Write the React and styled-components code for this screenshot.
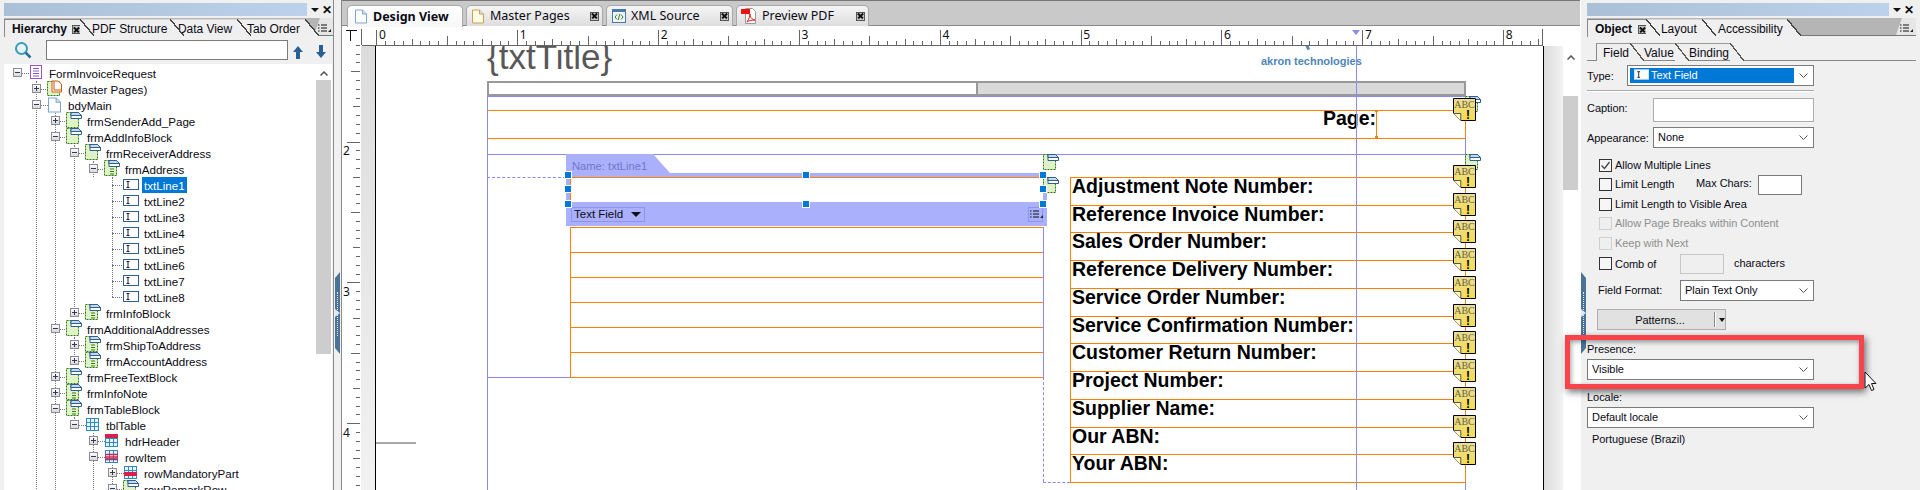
import React from 'react';
import styled, { createGlobalStyle } from 'styled-components';

const Global = createGlobalStyle`
  html, body { margin: 0; padding: 0; background: #efefef; overflow: hidden; }
  * { box-sizing: border-box; }
`;
const UI = `"Liberation Sans", Arial, sans-serif`;
const NOTO = `"Noto Sans", "Liberation Sans", sans-serif`;
const ARIAL = `"Liberation Sans", Arial, sans-serif`;

const Screen = styled.div`
  position: relative; width: 1920px; height: 490px; overflow: hidden;
  display: grid; grid-template-columns: 341px 1239px 340px;
  font: 11px ${UI}; letter-spacing: -0.05px; color: #0a0a14; background: #efefef;
`;

/* ---------- docked panels ---------- */
const Dock = styled.section`
  position: relative; height: 490px; background: #f0f0f0;
`;
const TitleRow = styled.div`
  position: absolute; top: 3px; left: ${p => p.$x}px; width: ${p => p.$w}px; height: 13px;
  display: flex; align-items: center;
`;
const TitleGradient = styled.div`
  flex: 1; height: 13px; background: linear-gradient(90deg, #a9c0d6, #bcd2ea);
`;
const TitleButtons = styled.div`
  width: ${p => p.$w}px; display: flex; justify-content: space-between; align-items: center;
  padding: 0 2px 0 ${p => p.$pad}px;
`;
const DropArrow = styled.i`
  width: 0; height: 0; border-left: 4px solid transparent; border-right: 4px solid transparent;
  border-top: 4px solid #111;
`;
const CloseX = styled.span`
  font: bold 12px ${ARIAL}; line-height: 12px;
`;
const TabStrip = styled.div`
  position: absolute; left: ${p => p.$x}px; top: 18px; width: ${p => p.$w}px; height: 18px;
  background: #b5b5b5; border-bottom: 1px solid #777;
`;
const PanelTab = styled.div`
  position: absolute; left: ${p => p.$x}px; top: 1px; width: ${p => p.$w}px; height: 17px;
  background: #efefef; padding-left: ${p => p.$pad}px; line-height: 18px; white-space: nowrap;
  font-size: 12px; letter-spacing: -0.05px;
  font-weight: ${p => (p.$active ? 700 : 400)}; z-index: ${p => p.$z};
  border-top: 1px solid ${p => (p.$active ? '#888' : '#d8d8d8')};
  ${p => (p.$active ? 'border-left: 1px solid #888; height: 18px;' : '')}
  &::after {
    content: ''; position: absolute; left: 100%; top: -1px; width: 14px; height: 17px;
    background: linear-gradient(to top right, #efefef calc(50% - .7px), #444 calc(50% - .7px), #444 calc(50% + .7px), transparent calc(50% + .7px));
  }
`;
const TabClose = styled.span`
  position: absolute; left: ${p => p.$x}px; top: 5px; width: 9px; height: 9px;
  background: #c4c4c4; border: 1px solid #555;
  &::before, &::after {
    content: ''; position: absolute; left: 0px; top: 2.5px; width: 7px; height: 1.6px; background: #111;
  }
  &::before { transform: rotate(45deg); }
  &::after { transform: rotate(-45deg); }
`;
const StripMenu = styled.div`
  position: absolute; right: 0; top: 0; width: 20px; height: 17px; padding: 6px 0 0 4px;
  background: #e6e6e6; clip-path: polygon(30% 0, 100% 0, 100% 100%, 0 100%); line-height: 0;
`;

/* ---------- search ---------- */
const SearchRow = styled.div`
  position: absolute; left: 0; top: 40px; width: 334px; height: 20px;
`;
const SearchInput = styled.div`
  position: absolute; left: 46px; top: 0; width: 242px; height: 20px; background: #fff; border: 1px solid #7a7a7a;
`;
const SearchGlyph = styled.svg`
  position: absolute; left: ${p => p.$x}px; top: ${p => p.$y}px;
`;

/* ---------- tree ---------- */
const Tree = styled.div`
  position: absolute; left: 4px; top: 64px; width: 328px; height: 426px; background: #fff; overflow: hidden;
  font-size: 11.6px; letter-spacing: 0;
`;
const TreeRow = styled.div`
  position: absolute; left: 0; top: ${p => p.$i * 16 + 1}px; width: 312px; height: 16px;
`;
const TreeLabel = styled.span`
  position: absolute; left: ${p => p.$x - 4}px; top: 0; height: 16px; line-height: 17px; padding: 0 2px;
  white-space: nowrap; margin-left: -2px;
  background: ${p => (p.$selected ? '#0078d7' : 'transparent')};
  color: ${p => (p.$selected ? '#fff' : '#0a0a14')};
`;
const Expander = styled.span`
  position: absolute; left: ${p => p.$x - 8.5}px; top: 3px; width: 9px; height: 9px;
  background: linear-gradient(#fff, #d8d8d8); border: 1px solid #8c8c8c; z-index: 2;
  &::before { content: ''; position: absolute; left: 1px; top: 3px; width: 5px; height: 1px; background: #2c3a63; }
  ${p => (p.$plus ? `&::after { content: ''; position: absolute; left: 3px; top: 1px; width: 1px; height: 5px; background: #2c3a63; }` : '')}
`;
const TreeGuideV = styled.i`
  position: absolute; left: ${p => p.$x - 4}px; top: ${p => p.$top - 64}px; height: ${p => p.$h}px;
  border-left: 1px dotted #777;
`;
const TreeGuideH = styled.i`
  position: absolute; left: ${p => p.$x - 4}px; top: 8px; width: ${p => p.$w}px; border-top: 1px dotted #777;
`;
const TreeIconBox = styled.span`
  position: absolute; left: ${p => p.$x - 4}px; top: ${p => p.$top}px; display: block; line-height: 0; z-index: 3;
`;
const Scroll = styled.div`
  position: absolute; left: ${p => p.$x}px; top: ${p => p.$y}px; width: 15px; height: ${p => p.$h}px;
  background: #cdcdcd;
`;
const ScrollUp = styled.svg`
  position: absolute; left: ${p => p.$x}px; top: ${p => p.$y}px;
`;
const PanelEdge = styled.div`
  position: absolute; left: ${p => p.$x}px; top: 0; width: 1px; height: 490px; background: ${p => p.$c}; z-index: 2;
`;
const Splitter = styled.div`
  position: absolute; left: ${p => p.$x}px; top: 272px; width: 5px; height: 82px; background: #4b7398;
  clip-path: polygon(0 6px, 100% 0, 100% 100%, 0 calc(100% - 6px));
  ${p => (p.$flip ? 'clip-path: polygon(0 0, 100% 6px, 100% calc(100% - 6px), 0 100%);' : '')}
  &::before {
    content: ''; position: absolute; left: 2px; top: 20px; height: 44px; border-left: 1px dotted #dfe8f2;
  }
  &::after {
    content: ''; position: absolute; left: 0; top: 37px; border-left: 5px solid #dfe8f2;
    border-top: 4px solid transparent; border-bottom: 4px solid transparent;
  }
`;

/* ---------- centre ---------- */
const Centre = styled.main`
  position: relative; height: 490px; background: #fff;
`;
const DocTabs = styled.nav`
  position: absolute; left: 0; top: 0; width: 100%; height: 26px; background: #c9c9c9;
  border-top: 1px solid #777; border-bottom: 1px solid #888; display: flex; padding: 4px 0 0 6px; gap: 3px;
`;
const DocTab = styled.div`
  width: ${p => p.$w}px; height: 21px; border: 1px solid #a8a8a8; border-bottom: 0; border-radius: 5px 5px 0 0;
  background: ${p => (p.$active ? 'linear-gradient(#fff, #f6f6f6)' : 'linear-gradient(#f5f5f5, #dedede)')};
  display: flex; align-items: center; padding: 0 3px 0 ${p => p.$pad}px; gap: ${p => p.$gap}px;
  font: ${p => (p.$active ? 700 : 400)} 12.5px ${NOTO}; letter-spacing: 0; position: relative;
  ${p => (p.$active ? 'height: 22px; z-index: 1;' : '')}
`;
const DocTabName = styled.span`
  flex: 1; white-space: nowrap; line-height: 18px;
`;
const DocClose = styled(TabClose)`
  position: relative; left: auto; top: auto; flex: none;
`;
const RulerSvg = styled.svg`
  position: absolute; left: 0; top: 26px; display: block;
`;
const SideRulerSvg = styled.svg`
  position: absolute; left: 0; top: 45px; display: block;
`;
const MarginBand = styled.div`
  position: absolute; left: ${p => p.$x - 341}px; top: 46px; width: ${p => p.$w}px; height: 444px;
  background: linear-gradient(${p => p.$dir || '180deg'}, #dcdcdc, #f2f2f2);
`;
const ScrollWell = styled.div`
  position: absolute; left: 1222px; top: 26px; width: 17px; height: 464px; background: #fff;
`;

const Surface = styled.div`
  position: absolute; left: 35px; top: 46px; width: 1167px; height: 444px; background: #fff; overflow: hidden;
  font-family: ${ARIAL}; letter-spacing: 0;
`;
const at = p => `left: ${p.$x - 376}px; top: ${p.$y - 46}px;`;
const HLine = styled.i`
  position: absolute; ${at} width: ${p => p.$w}px; height: 1px; background: ${p => p.$c};
`;
const VLine = styled.i`
  position: absolute; ${at} width: 1px; height: ${p => p.$h}px; background: ${p => p.$c};
`;
const DashH = styled.i`
  position: absolute; ${at} width: ${p => p.$w}px; border-top: 1px dashed #8a8af0;
`;
const DashV = styled.i`
  position: absolute; ${at} height: ${p => p.$h}px; border-left: 1px dashed #8a8af0;
`;
const TitleText = styled.div`
  position: absolute; ${at} font-size: 35px; line-height: 40px; color: #585858; white-space: nowrap;
`;
const Logo = styled.div`
  position: absolute; ${at} font-size: 11px; font-weight: 700; color: #4f86b8; white-space: nowrap; line-height: 14px;
`;
const LogoTick = styled.i`
  position: absolute; ${at} width: 3px; height: 6px; background: #5b8fb9; transform: rotate(-25deg);
`;
const PageHeader = styled.div`
  position: absolute; ${at} width: 979px; height: 15px; display: flex; border: 2px solid #999; background: #fff;
`;
const PageHeaderFill = styled.div`
  margin-left: 487px; flex: 1; background: #d9d9d9; border-left: 2px solid #999;
`;
const PageCaption = styled.div`
  position: absolute; ${at} width: 60px; text-align: right; font-size: 19.5px; font-weight: 700; color: #000; line-height: 20px;
`;
const CursorStem = styled.i`
  position: absolute; ${at} width: 1px; height: 28px; background: #ff8000;
  &::before, &::after { content: ''; position: absolute; left: -1px; width: 3px; height: 2px; background: #ff8000; }
  &::before { top: 0; } &::after { bottom: 0; }
`;
const NameTab = styled.div`
  position: absolute; ${at} width: 104px; height: 19px; background: #aab0fb; padding-left: 6px;
  clip-path: polygon(0 0, 87px 0, 104px 100%, 0 100%);
  font: 11.2px/24px ${UI}; color: #7277c6; white-space: nowrap;
`;
const SelBand = styled.div`
  position: absolute; ${at} width: ${p => p.$w}px; height: ${p => p.$h}px; background: #aab0fb;
`;
const TypePicker = styled.div`
  position: absolute; ${at} width: 74px; height: 15px; border: 1px solid #8f94f2;
  font: 11.5px/13px ${UI}; color: #0a0a14; padding-left: 2px; white-space: nowrap;
`;
const TypePickerArrow = styled.i`
  position: absolute; right: 3px; top: 4px; width: 0; height: 0;
  border-left: 5px solid transparent; border-right: 5px solid transparent; border-top: 5px solid #111;
`;
const OptionsBox = styled.div`
  position: absolute; ${at} width: 15px; height: 15px; border: 1px solid #8f94f2; line-height: 0; padding: 2px 0 0 1px;
`;
const Handle = styled.i`
  position: absolute; left: ${p => p.$x - 376 - 3}px; top: ${p => p.$y - 46 - 3}px; width: 6px; height: 6px;
  background: #0078d7; outline: 1px solid #fff; z-index: 4;
`;
const AddressList = styled.div`
  position: absolute; ${at} width: 473px; border-left: 1px solid #ff8000; border-bottom: 1px solid #ff8000;
`;
const AddressLine = styled.div`
  height: 25px; border-top: 1px solid #ff8000;
`;
const NumberList = styled.div`
  position: absolute; ${at} width: 396px; height: 306px; display: grid; grid-template-rows: repeat(11, 1fr);
  border-left: 1px solid #ff8000; border-right: 1px solid #ff8000; border-bottom: 1px solid #ff8000;
`;
const NumberRow = styled.div`
  border-top: 1px solid #ff8000; font-size: 19.5px; font-weight: 700; color: #000; line-height: 17px; padding-left: 1px; white-space: nowrap;
`;
const Pin = styled.span`
  position: absolute; ${at} display: block; line-height: 0; z-index: 3;
`;
const FooterDash = styled.i`
  position: absolute; ${at} width: 40px; height: 2px; background: #a8a8a8;
`;
const GuideMark = styled.i`
  position: absolute; left: 1011px; top: 4px; width: 0; height: 0; border-left: 4px solid transparent;
  border-right: 4px solid transparent; border-top: 5px solid #8a8af0;
`;

/* ---------- object panel ---------- */
const Spot = styled.div`
  position: absolute; left: ${p => p.$x - 1580}px; top: ${p => p.$y}px;
`;
const FieldLabel = styled(Spot)`
  line-height: 16px; margin-top: -8px; white-space: nowrap; color: ${p => (p.$off ? '#8e8e8e' : '#0a0a14')};
`;
const Combo = styled(Spot)`
  width: ${p => p.$w}px; height: ${p => p.$h || 21}px; background: #fff; border: 1px solid #7a7a7a;
  padding-left: 4px; line-height: 19px; white-space: nowrap;
`;
const ComboChevron = styled.svg`
  position: absolute; right: 5px; top: 7px;
`;
const TypeHighlight = styled.div`
  position: absolute; left: 2px; top: 2px; width: 164px; height: 15px; background: #0078d7; color: #fff;
  line-height: 15px; padding-left: 21px;
`;
const TypeIcon = styled.svg`
  position: absolute; left: 4px; top: 1px;
`;
const Rule = styled(Spot)`
  width: 227px; height: 2px; border-top: 1px solid #aaa; border-bottom: 1px solid #fff;
`;
const TextBox = styled(Spot)`
  width: ${p => p.$w}px; height: ${p => p.$h}px; background: ${p => (p.$off ? '#efefef' : '#fff')};
  border: 1px solid ${p => (p.$off ? '#c8c8c8' : p.$dark ? '#7a7a7a' : '#adadad')};
`;
const Box = styled(Spot)`
  width: 13px; height: 13px; background: ${p => (p.$off ? '#efefef' : '#f6f6f6')};
  border: 1px solid ${p => (p.$off ? '#cfcfcf' : '#333')};
  line-height: 0;
`;
const SplitButton = styled(Spot)`
  width: 129px; height: 21px; background: #e1e1e1; border: 1px solid #adadad; display: flex; align-items: center;
`;
const SplitLabel = styled.span`
  width: 116px; text-align: center; padding-left: 8px;
`;
const SplitRule = styled.i`
  width: 1px; height: 15px; background: #888; border-right: 1px solid #fff; box-sizing: content-box;
`;
const SplitArrow = styled.i`
  margin-left: 3px; width: 0; height: 0; border-left: 3.5px solid transparent; border-right: 3.5px solid transparent; border-top: 4px solid #111;
`;
const RedFrame = styled.div`
  position: absolute; left: 1565px; top: 335px; width: 299px; height: 54px; border: 5px solid #f8434b;
  box-shadow: 2px 3px 7px rgba(0,0,0,.55), inset 1px 2px 5px rgba(0,0,0,.4); z-index: 10;
`;
const Pointer = styled.svg`
  position: absolute; left: 1864px; top: 371px; z-index: 11;
`;

/* ---------- drawings ---------- */
const Page = ({ c = '#7ea6cf', f = '#fff', w = 12, h = 15 }) => (
  <svg width={w} height={h} viewBox="0 0 12 14">
    <path d="M.5.5h7l4 4v9H.5z" fill={f} stroke={c} />
    <path d="M7.5.5v4h4" fill="#cfe0f2" stroke={c} />
  </svg>
);
const FrameDoc = ({ list }) => (
  <svg width="16" height="17" viewBox="0 0 16 17">
    <rect x=".5" y=".5" width="12" height="15" fill="#e0f2c8" stroke="#2f7a10" strokeDasharray="2 1" />
    <path d="M5 .5h7.5l3 3v3H5z" fill="#fff" stroke="#2d5f91" />
    <path d="M5 .5h7.5l3 3H5z" fill="#c7d8ea" stroke="#2d5f91" />
    {list && <path d="M6 9h4M6 11.500h4M6 14h4" stroke="#3c7d1a" />}
  </svg>
);
const FormGlyph = () => (
  <svg width="13" height="15" viewBox="0 0 13 15">
    <rect x=".5" y=".5" width="11" height="13" fill="#fff" stroke="#a050d8" />
    <path d="M3 3.500h6M3 6h6M3 8.500h6M3 11h6" stroke="#7a5bc0" />
  </svg>
);
const MasterGlyph = () => (
  <svg width="16" height="17" viewBox="0 0 16 17">
    <rect x=".5" y="1.500" width="12" height="14" fill="#e0f2c8" stroke="#2f7a10" strokeDasharray="2 1" />
    <path d="M5 1h6l3.500 3v8H5z" fill="#fff" stroke="#d05a10" />
    <path d="M7 1v9h8" fill="none" stroke="#d05a10" />
  </svg>
);
const TextGlyph = () => (
  <svg width="16" height="11" viewBox="0 0 16 11">
    <rect x=".5" y=".5" width="15" height="10" fill="#fff" stroke="#2e5d92" />
    <path d="M3.500 2.500h3M5 2.500v6M3.500 8.500h3" stroke="#222" />
  </svg>
);
const TableGlyph = ({ bands }) => (
  <svg width="13" height="13" viewBox="0 0 13 13">
    <rect x=".5" y=".5" width="12" height="12" fill="#e8f4fc" stroke="#2f8ac0" />
    <path d="M.5 4.500h12M.5 8.500h12M4.500.5v12M8.500.5v12" stroke="#2f8ac0" />
    {bands === 'top' && <rect x="0" y="0" width="13" height="4" fill="#d8204f" />}
    {bands === 'mid' && <path d="M0 4.500h13M0 7h13M0 9.500h13" stroke="#d8204f" strokeWidth="1.600" />}
    {bands === 'low' && <rect x="0" y="6" width="13" height="4" fill="#d8204f" />}
  </svg>
);
const Abc = () => (
  <svg width="23" height="23" viewBox="0 0 23 23">
    <defs>
      <linearGradient id="abcFill" x1="0" y1="0" x2="0" y2="1">
        <stop offset="0" stopColor="#e9dd9a" />
        <stop offset="1" stopColor="#f6dd4e" />
      </linearGradient>
    </defs>
    <path d="M.5.5h22v22H8L.5 15z" fill="url(#abcFill)" stroke="#000" />
    <path d="M.8 15.500h7v7" fill="#fff7c8" stroke="#555" />
    <text x="11.500" y="10" textAnchor="middle" fontFamily={'"Liberation Serif", serif'} fontSize="10" fill="#6b6336">ABC</text>
    <text x="15" y="21" textAnchor="middle" fontFamily={ARIAL} fontWeight="700" fontSize="12" fill="#000">!</text>
  </svg>
);
const Lines = () => (
  <svg width="14" height="9" viewBox="0 0 14 9">
    <path d="M0 1h1.500M3 1h6M0 4h1.500M3 4h6M0 7h1.500M3 7h6" stroke="#111" />
    <path d="M13 5v3h-3z" fill="#222" />
  </svg>
);
const Chevron = () => (
  <ComboChevron width="9" height="5" viewBox="0 0 9 5">
    <path d="M.5.5l4 4 4-4" fill="none" stroke="#555" />
  </ComboChevron>
);

const TreeGlyph = ({ kind, x }) => {
  const map = {
    form: [<FormGlyph />, x + 2, 0],
    master: [<MasterGlyph />, x, -1],
    page: [<Page w={13} h={16} />, x + 1, 0],
    frame: [<FrameDoc />, x, -1],
    list: [<FrameDoc list />, x, -1],
    text: [<TextGlyph />, x, 2],
    table: [<TableGlyph />, x + 1, 1],
    head: [<TableGlyph bands="top" />, x + 1, 1],
    rowm: [<TableGlyph bands="mid" />, x + 1, 1],
    rowl: [<TableGlyph bands="low" />, x + 1, 1],
  };
  const [node, left, top] = map[kind];
  return <TreeIconBox $x={left} $top={top}>{node}</TreeIconBox>;
};

const rows = [
  ['FormInvoiceRequest', 0, 'form', '-'],
  ['(Master Pages)', 1, 'master', '+'],
  ['bdyMain', 1, 'page', '-'],
  ['frmSenderAdd_Page', 2, 'frame', '+'],
  ['frmAddInfoBlock', 2, 'frame', '-'],
  ['frmReceiverAddress', 3, 'frame', '-'],
  ['frmAddress', 4, 'list', '-'],
  ['txtLine1', 5, 'text', ''],
  ['txtLine2', 5, 'text', ''],
  ['txtLine3', 5, 'text', ''],
  ['txtLine4', 5, 'text', ''],
  ['txtLine5', 5, 'text', ''],
  ['txtLine6', 5, 'text', ''],
  ['txtLine7', 5, 'text', ''],
  ['txtLine8', 5, 'text', ''],
  ['frmInfoBlock', 3, 'list', '+'],
  ['frmAdditionalAddresses', 2, 'frame', '-'],
  ['frmShipToAddress', 3, 'list', '+'],
  ['frmAccountAddress', 3, 'list', '+'],
  ['frmFreeTextBlock', 2, 'frame', '+'],
  ['frmInfoNote', 2, 'list', '+'],
  ['frmTableBlock', 2, 'list', '-'],
  ['tblTable', 3, 'table', '-'],
  ['hdrHeader', 4, 'head', '+'],
  ['rowItem', 4, 'rowm', '-'],
  ['rowMandatoryPart', 5, 'rowl', '+'],
  ['rowRemarkRow', 5, 'frame', '-'],
];
const guides = [
  [36, 81, 410], [55, 113, 377], [74, 145, 168], [93, 161, 16], [112, 177, 120],
  [74, 337, 24], [74, 417, 8], [93, 433, 57], [112, 465, 25],
];

const Hierarchy = () => (
  <Dock>
    <TitleRow $x={4} $w={330}>
      <TitleGradient />
      <TitleButtons $w={27} $pad={4}><DropArrow /><CloseX>✕</CloseX></TitleButtons>
    </TitleRow>
    <TabStrip $x={4} $w={330}>
      <PanelTab $x={0} $w={76} $pad={7} $active $z={4}>Hierarchy<TabClose $x={67} /></PanelTab>
      <PanelTab $x={76} $w={90} $pad={12} $z={3}>PDF Structure</PanelTab>
      <PanelTab $x={166} $w={67} $pad={8} $z={2}>Data View</PanelTab>
      <PanelTab $x={233} $w={68} $pad={10} $z={1}>Tab Order</PanelTab>
      <StripMenu><Lines /></StripMenu>
    </TabStrip>
    <SearchRow>
      <SearchGlyph $x={14} $y={1} width="18" height="18" viewBox="0 0 18 18">
        <circle cx="7.500" cy="7.500" r="5.500" fill="#e6f4f8" stroke="#3a9ab8" strokeWidth="2" />
        <path d="M11.500 11.500l5 5" stroke="#2a6f94" strokeWidth="2.500" />
      </SearchGlyph>
      <SearchInput />
      <SearchGlyph $x={293} $y={6} width="10" height="13" viewBox="0 0 10 13">
        <path d="M5 0l5 6H7v7H3V6H0z" fill="#2a5f94" />
      </SearchGlyph>
      <SearchGlyph $x={316} $y={5} width="10" height="13" viewBox="0 0 10 13">
        <path d="M5 13L0 7h3V0h4v7h3z" fill="#2a5f94" />
      </SearchGlyph>
    </SearchRow>
    <Tree>
      {guides.map((g, i) => <TreeGuideV key={i} $x={g[0]} $top={g[1]} $h={g[2]} />)}
      {rows.map(([name, d, kind, exp], i) => {
        const ex = 17 + 19 * d;
        const textX = 49 + 19 * d;
        return (
          <TreeRow key={name} $i={i}>
            <TreeGuideH $x={exp ? ex : 112} $w={12} />
            {exp && <Expander $x={ex} $plus={exp === '+'} />}
            <TreeGlyph kind={kind} x={d === 5 && !exp ? 123 : 28 + 19 * d} />
            <TreeLabel $x={d === 5 && !exp ? 144 : textX} $selected={name === 'txtLine1'}>{name}</TreeLabel>
          </TreeRow>
        );
      })}
      <Scroll $x={312} $y={16} $h={274} />
      <ScrollUp $x={316} $y={7} width="8" height="5" viewBox="0 0 8 5"><path d="M.5 4.500L4 1l3.500 3.500" fill="none" stroke="#555" strokeWidth="1.500" /></ScrollUp>
    </Tree>
    <PanelEdge $x={333} $c="#8a8a8a" />
    <Splitter $x={335} />
  </Dock>
);

const inch = 140.85;
const TopRuler = () => {
  const ticks = [];
  for (let k = 0; k <= 132; k++) {
    const x = 35.8 + k * inch / 16;
    const h = k % 16 === 0 ? 15 : k % 8 === 0 ? 9 : k % 4 === 0 ? 6 : 4;
    if (x < 1202) ticks.push(<path key={k} d={`M${x.toFixed(1)} 19v${-h}`} stroke="#666" shapeRendering="crispEdges" />);
  }
  return (
    <RulerSvg width="1203" height="20" viewBox="0 0 1203 20">
      <path d="M21 19H1202" stroke="#666" shapeRendering="crispEdges" />
      <path d="M20 3v16" stroke="#666" shapeRendering="crispEdges" />
      <path d="M5 4h11M9 4v11" stroke="#111" fill="none" shapeRendering="crispEdges" />
      {ticks}
      <path d="M1201.500 3v16" stroke="#666" shapeRendering="crispEdges" />
      {[0, 1, 2, 3, 4, 5, 6, 7, 8].map(n => (
        <text key={n} x={38 + n * inch} y="13" fontSize="12" fontFamily={NOTO} fill="#111">{n}</text>
      ))}
    </RulerSvg>
  );
};
const SideRuler = () => {
  const ticks = [];
  for (let k = -16; k <= 48; k++) {
    const y = 97 + k * inch / 16;
    if (y < 0 || y > 445) continue;
    const w = k % 16 === 0 ? 13 : k % 8 === 0 ? 9 : k % 4 === 0 ? 7 : 4;
    ticks.push(<path key={k} d={`M19 ${y.toFixed(1)}h${-w}`} stroke="#666" shapeRendering="crispEdges" />);
  }
  return (
    <SideRulerSvg width="20" height="445" viewBox="0 0 20 445">
      {ticks}
      {[2, 3, 4].map((n, i) => (
        <text key={n} x="2" y={110 + i * inch} fontSize="12" fontFamily={NOTO} fill="#111">{n}</text>
      ))}
    </SideRulerSvg>
  );
};

const numberLabels = [
  'Adjustment Note Number:', 'Reference Invoice Number:', 'Sales Order Number:', 'Reference Delivery Number:',
  'Service Order Number:', 'Service Confirmation Number:', 'Customer Return Number:', 'Project Number:',
  'Supplier Name:', 'Our ABN:', 'Your ABN:',
];
const abcYs = [98, 165, 193, 220, 248, 276, 304, 331, 359, 387, 415, 442];

const BlackRule = styled.i`
  position: absolute; left: ${p => p.$x}px; top: 46px; width: 1px; height: 444px; background: #000;
`;
const GuideHolder = styled.div`position: absolute; left: 0; top: 26px; width: 1239px; height: 20px;`;

const Design = () => (
  <Centre>
    <PanelEdge $x={0} $c="#8a8a8a" />
    <DocTabs>
      <DocTab $w={116} $pad={7} $gap={6} $active><Page /><DocTabName>Design View</DocTabName></DocTab>
      <DocTab $w={137} $pad={5} $gap={6}><Page c="#c9a24a" f="#fffbe8" /><DocTabName>Master Pages</DocTabName><DocClose /></DocTab>
      <DocTab $w={127} $pad={5} $gap={5}>
        <svg width="14" height="14" viewBox="0 0 14 14">
          <rect x=".5" y=".5" width="13" height="13" fill="#eef4fb" stroke="#4a78ad" />
          <rect x=".5" y=".5" width="13" height="2.500" fill="#4a78ad" />
          <path d="M5 5.500L3 8l2 2.500M9 5.500l2 2.500-2 2.500M7.800 5L6.200 11" fill="none" stroke="#3d7d1e" />
        </svg>
        <DocTabName>XML Source</DocTabName><DocClose />
      </DocTab>
      <DocTab $w={133} $pad={4} $gap={5}>
        <svg width="16" height="16" viewBox="0 0 16 16">
          <path d="M4.500.5h7l3 3v12h-10z" fill="#fff" stroke="#999" />
          <rect x="0" y="1" width="9" height="5" fill="#e11" />
          <path d="M6 14c2-3 3-6 3-8 0 3 1 5 5 6-3 0-6 .5-8 2z" fill="none" stroke="#e11" />
        </svg>
        <DocTabName>Preview PDF</DocTabName><DocClose />
      </DocTab>
    </DocTabs>
    <TopRuler />
    <SideRuler />
    <MarginBand $x={361} $w={14} />
    <BlackRule $x={34} />
    <BlackRule $x={1202} />
    <Surface>
      <TitleText $x={487} $y={37}>{'{txtTitle}'}</TitleText>
      <LogoTick $x={1306} $y={44} />
      <Logo $x={1261} $y={54}>akron technologies</Logo>
      <PageHeader $x={487} $y={81}><PageHeaderFill /></PageHeader>

      <HLine $x={487} $y={96} $w={978} $c="#8a8af0" />
      <HLine $x={487} $y={110} $w={978} $c="#ff8000" />
      <HLine $x={487} $y={138} $w={978} $c="#ff8000" />
      <HLine $x={487} $y={154} $w={978} $c="#8a8af0" />
      <VLine $x={487} $y={96} $h={394} $c="#8a8af0" />
      <HLine $x={487} $y={377} $w={83} $c="#8a8af0" />
      <DashH $x={487} $y={177} $w={79} />
      <VLine $x={1465} $y={96} $h={14} $c="#8a8af0" />
      <VLine $x={1465} $y={110} $h={28} $c="#ff8000" />
      <VLine $x={1465} $y={138} $h={39} $c="#8a8af0" />
      <VLine $x={1465} $y={482} $h={8} $c="#8a8af0" />
      <VLine $x={1043} $y={227} $h={150} $c="#8a8af0" />
      <DashV $x={1043} $y={377} $h={105} />
      <DashH $x={1043} $y={482} $w={27} />

      <PageCaption $x={1316} $y={108}>Page:</PageCaption>
      <CursorStem $x={1376} $y={110} />

      <AddressList $x={570} $y={227}>
        {[0, 1, 2, 3, 4, 5].map(i => <AddressLine key={i} />)}
      </AddressList>

      <NameTab $x={566} $y={154}>Name: txtLine1</NameTab>
      <SelBand $x={566} $y={173} $w={477} $h={4} />
      <HLine $x={570} $y={177} $w={473} $c="#ff8000" />
      <VLine $x={570} $y={177} $h={25} $c="#ff8000" />
      <SelBand $x={566} $y={177} $w={4} $h={25} />
      <SelBand $x={1043} $y={177} $w={4} $h={25} />
      <SelBand $x={566} $y={202} $w={481} $h={24} />
      <TypePicker $x={571} $y={207}>Text Field<TypePickerArrow /></TypePicker>
      <OptionsBox $x={1028} $y={207}><Lines /></OptionsBox>
      {[[568, 175], [568, 189], [568, 204], [806, 175], [806, 204], [1043, 175], [1043, 189], [1043, 204]].map(([x, y]) => (
        <Handle key={x + '-' + y} $x={x} $y={y} />
      ))}

      <NumberList $x={1070} $y={177}>
        {numberLabels.map(t => <NumberRow key={t}>{t}</NumberRow>)}
      </NumberList>

      <VLine $x={1356} $y={46} $h={444} $c="#8a8af0" />
      {[[1043, 154], [1043, 177], [1465, 96], [1465, 154]].map(([x, y]) => (
        <Pin key={x + '-' + y} $x={x} $y={y}><FrameDoc /></Pin>
      ))}
      {abcYs.map(y => <Pin key={y} $x={1453} $y={y}><Abc /></Pin>)}
      <FooterDash $x={376} $y={442} />
    </Surface>
    <GuideHolder><GuideMark /></GuideHolder>
    <MarginBand $x={1544} $w={19} $dir="90deg" />
    <ScrollWell>
      <Scroll $x={0} $y={70} $h={94} />
      <ScrollUp $x={4} $y={29} width="8" height="5" viewBox="0 0 8 5"><path d="M.5 4.500L4 1l3.500 3.500" fill="none" stroke="#555" strokeWidth="1.500" /></ScrollUp>
    </ScrollWell>
  </Centre>
);

const Check = () => (
  <svg width="11" height="11" viewBox="0 0 11 11"><path d="M1.500 5.500l3 3 5-6.500" fill="none" stroke="#444" strokeWidth="1.300" /></svg>
);

const SubTabs = styled.div`
  position: absolute; left: 7px; top: 43px; width: 329px; height: 18px; border-bottom: 1px solid #888;
`;
const SubTab = styled.div`
  position: absolute; left: ${p => p.$x}px; top: 0; width: ${p => p.$w}px; height: 17px; padding-left: ${p => p.$pad}px;
  font-size: 12px; letter-spacing: 0;
  line-height: 18px; background: #efefef; z-index: ${p => p.$z}; white-space: nowrap;
  border-top: 1px solid #999; ${p => (p.$z === 3 ? 'border-left: 1px solid #888; height: 18px;' : '')}
  &::after {
    content: ''; position: absolute; left: 100%; top: -1px; width: 14px; height: 18px;
    background: linear-gradient(to top right, #efefef calc(50% - .7px), #555 calc(50% - .7px), #555 calc(50% + .7px), transparent calc(50% + .7px));
  }
`;

const ObjectPanel = () => (
  <Dock>
    <PanelEdge $x={0} $c="#fff" />
    <Splitter $x={1} $flip />
    <TitleRow $x={7} $w={329}>
      <TitleGradient />
      <TitleButtons $w={27} $pad={4}><DropArrow /><CloseX>✕</CloseX></TitleButtons>
    </TitleRow>
    <TabStrip $x={7} $w={329}>
      <PanelTab $x={0} $w={59} $pad={7} $active $z={3}>Object<TabClose $x={50} /></PanelTab>
      <PanelTab $x={59} $w={56} $pad={15} $z={2}>Layout</PanelTab>
      <PanelTab $x={115} $w={85} $pad={16} $z={1}>Accessibility</PanelTab>
      <StripMenu><Lines /></StripMenu>
    </TabStrip>
    <SubTabs>
      <SubTab $x={9} $w={34} $pad={6} $z={3}>Field</SubTab>
      <SubTab $x={43} $w={45} $pad={14} $z={2}>Value</SubTab>
      <SubTab $x={88} $w={55} $pad={14} $z={1}>Binding</SubTab>
    </SubTabs>

    <FieldLabel $x={1587} $y={76}>Type:</FieldLabel>
    <Combo $x={1627} $y={65} $w={187} $h={21}>
      <TypeHighlight>
        <TypeIcon width="15" height="11" viewBox="0 0 16 11"><rect x=".5" y=".5" width="15" height="10" fill="#fff" stroke="#d8e8f8" /><path d="M3.500 2.500h3M5 2.500v6M3.500 8.500h3" stroke="#222" /></TypeIcon>
        Text Field
      </TypeHighlight>
      <Chevron />
    </Combo>
    <Rule $x={1587} $y={90} />
    <FieldLabel $x={1587} $y={108}>Caption:</FieldLabel>
    <TextBox $x={1653} $y={98} $w={161} $h={24} />
    <FieldLabel $x={1587} $y={138}>Appearance:</FieldLabel>
    <Combo $x={1653} $y={127} $w={161} $h={21}>None<Chevron /></Combo>

    <Box $x={1599} $y={159}><Check /></Box>
    <FieldLabel $x={1615} $y={165}>Allow Multiple Lines</FieldLabel>
    <Box $x={1599} $y={178} />
    <FieldLabel $x={1615} $y={184}>Limit Length</FieldLabel>
    <FieldLabel $x={1696} $y={183}>Max Chars:</FieldLabel>
    <TextBox $x={1758} $y={175} $w={44} $h={20} $dark />
    <Box $x={1599} $y={198} />
    <FieldLabel $x={1615} $y={204}>Limit Length to Visible Area</FieldLabel>
    <Box $x={1599} $y={217} $off />
    <FieldLabel $x={1615} $y={223} $off>Allow Page Breaks within Content</FieldLabel>
    <Box $x={1599} $y={237} $off />
    <FieldLabel $x={1615} $y={243} $off>Keep with Next</FieldLabel>
    <Box $x={1599} $y={257} />
    <FieldLabel $x={1615} $y={264}>Comb of</FieldLabel>
    <TextBox $x={1680} $y={254} $w={44} $h={20} $off />
    <FieldLabel $x={1734} $y={263}>characters</FieldLabel>
    <FieldLabel $x={1598} $y={290}>Field Format:</FieldLabel>
    <Combo $x={1680} $y={280} $w={134} $h={21}>Plain Text Only<Chevron /></Combo>
    <SplitButton $x={1597} $y={309}>
      <SplitLabel>Patterns...</SplitLabel><SplitRule /><SplitArrow />
    </SplitButton>
    <FieldLabel $x={1587} $y={349}>Presence:</FieldLabel>
    <Combo $x={1587} $y={359} $w={227} $h={21}>Visible<Chevron /></Combo>
    <FieldLabel $x={1587} $y={397}>Locale:</FieldLabel>
    <Combo $x={1587} $y={407} $w={227} $h={21}>Default locale<Chevron /></Combo>
    <FieldLabel $x={1592} $y={439}>Portuguese (Brazil)</FieldLabel>
  </Dock>
);

export default function App() {
  return (
    <>
      <Global />
      <Screen>
        <Hierarchy />
        <Design />
        <ObjectPanel />
        <RedFrame />
        <Pointer width="13" height="21" viewBox="0 0 13 21">
          <path d="M1 1v16l4-3.500 2.500 6 2.500-1-2.500-6H12z" fill="#fff" stroke="#111" />
        </Pointer>
      </Screen>
    </>
  );
}
